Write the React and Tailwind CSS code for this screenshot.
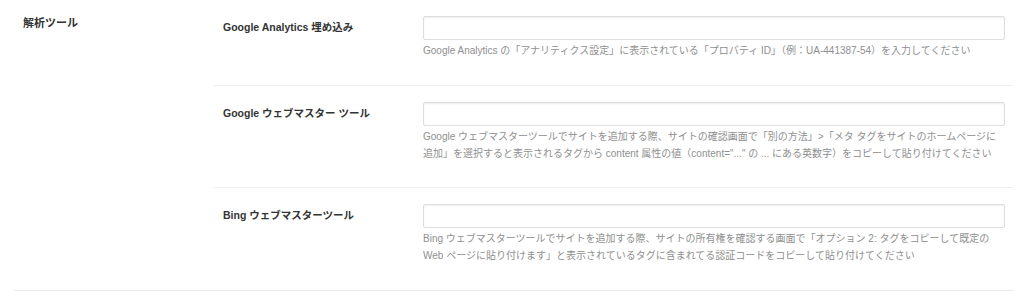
import React, { useState } from "react";

const fields = [
  {
    name: "ga",
    label: "Google Analytics 埋め込み",
    help: ["Google Analytics の「アナリティクス設定」に表示されている「プロパティ ID」（例：UA-441387-54）を入力してください"],
    row: "pb-[26px] border-b border-[#eeeeee]",
  },
  {
    name: "gwt",
    label: "Google ウェブマスター ツール",
    help: [
      "Google ウェブマスターツールでサイトを追加する際、サイトの確認画面で「別の方法」>「メタ タグをサイトのホームページに",
      "追加」を選択すると表示されるタグから content 属性の値（content=\"...\" の ... にある英数字）をコピーして貼り付けてください",
    ],
    row: "pb-[25px] border-b border-[#eeeeee]",
  },
  {
    name: "bing",
    label: "Bing ウェブマスターツール",
    help: [
      "Bing ウェブマスターツールでサイトを追加する際、サイトの所有権を確認する画面で「オプション 2: タグをコピーして既定の",
      "Web ページに貼り付けます」と表示されているタグに含まれてる認証コードをコピーして貼り付けてください",
    ],
    row: "pb-[26px]",
  },
];

export default function App() {
  const [form, setForm] = useState({ ga: "", gwt: "", bing: "" });

  const handleChange = (e) => {
    setForm({ ...form, [e.target.name]: e.target.value });
  };

  return (
    <div
      className="bg-white w-[1024px] h-[291px] px-[14px] text-[#333]"
      style={{ fontFamily: '"Liberation Sans", "Noto Sans CJK JP", sans-serif' }}
    >
      <div className="flex w-[999px] border-b border-[#e3e9ec]">
        {/* section title */}
        <div className="w-[200px] shrink-0 pl-[9px] pt-[16px]">
          <h2 className="text-[11px] leading-[14px] font-bold text-[#333]">解析ツール</h2>
        </div>

        {/* rows */}
        <div className="flex-1">
          {fields.map((f) => (
            <div key={f.name} className={"flex pt-[16px] " + f.row}>
              <label className="w-[200px] shrink-0 pl-[9px] pt-[3px] text-[10.5px] leading-[16px] font-bold text-[#333]">
                {f.label}
              </label>
              <div className="flex-1 pl-[9px] pr-[8px]">
                <input
                  type="text"
                  name={f.name}
                  value={form[f.name]}
                  onChange={handleChange}
                  className="block w-full h-[24px] rounded-[2px] border border-[#dddddd] bg-white shadow-[inset_0_1px_2px_rgba(0,0,0,0.07)] outline-none px-2 text-[11px]"
                />
                <p className="mt-[2px] text-[10px] leading-[17px] text-[#8f8f8f] whitespace-nowrap">
                  {f.help.map((line, j) => (
                    <span key={j} className="block">
                      {line}
                    </span>
                  ))}
                </p>
              </div>
            </div>
          ))}
        </div>
      </div>
    </div>
  );
}
